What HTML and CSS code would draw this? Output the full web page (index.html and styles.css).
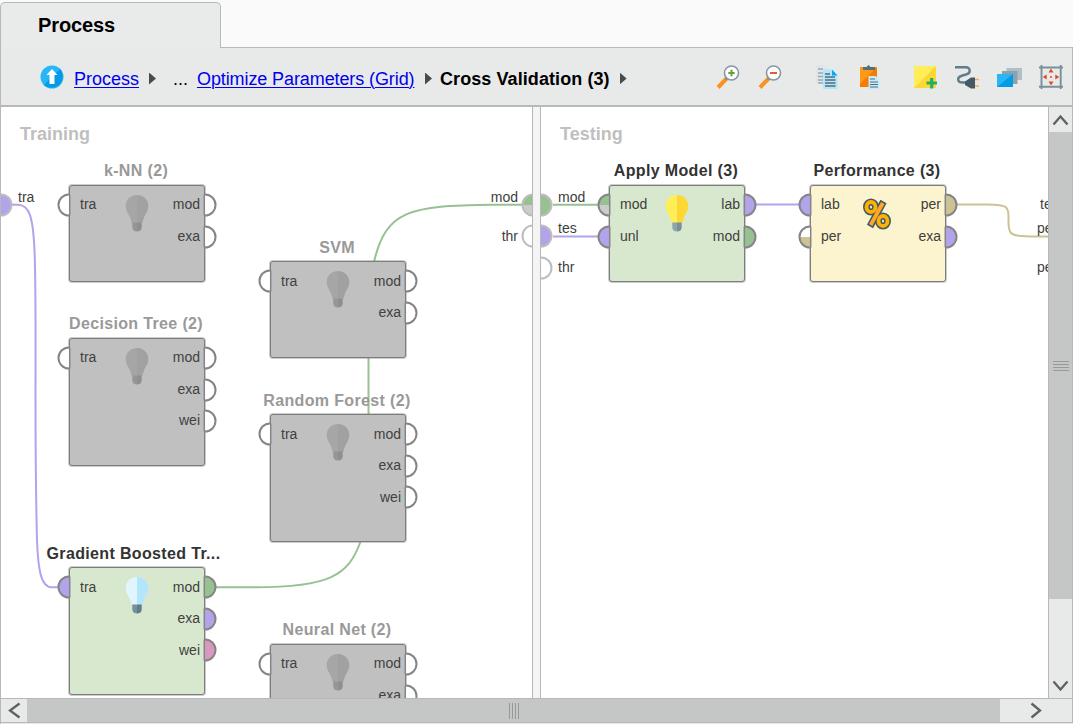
FILE: index.html
```html
<!DOCTYPE html>
<html lang="en">
<head>
<meta charset="utf-8">
<title>Process</title>
<link rel="stylesheet" href="styles.css">
</head>
<body>
<svg class="defs" width="0" height="0">
  <symbol id="pin" viewBox="0 0 14 24"><path class="pf" d="M12 1.5A10.5 10.5 0 0 0 12 22.500z"/><path class="ps" d="M13 1.500H12A10.500 10.500 0 0 0 12 22.500H13"/><path class="pl" d="M12.700 1.500V22.500"/></symbol>
  <symbol id="pin-top" viewBox="0 0 14 24"><path fill="#fff" d="M12 1.500A10.500 10.500 0 0 0 12 22.500z"/><path class="pb" d="M1.500 12A10.500 10.500 0 0 0 12 22.500V12z"/><path class="pf" d="M1.500 12A10.500 10.500 0 0 1 12 1.500V12z"/><path class="ps" d="M13 1.500H12A10.500 10.500 0 0 0 12 22.500H13"/><path class="pl" d="M12.700 1.500V22.500"/></symbol>
  <symbol id="bulb" viewBox="0 0 24 37"><path class="b1" d="M12 0C5 0 .7 5 .7 11c0 5 2.800 7.500 4.300 11.500L6.800 28H12z"/><path class="b2" d="M12 0c7 0 11.300 5 11.300 11 0 5-2.800 7.500-4.300 11.500L17.200 28H12z"/><path class="b3" d="M7.300 27.500H12V36.500c-3 0-4.500-1.500-4.700-4z"/><path class="b4" d="M12 27.500h4.700V32.500c-.2 2.500-1.700 4-4.700 4z"/></symbol>
</svg>
<div class="app">
  <header class="tabs"><div class="tab">Process</div></header>
  <nav class="bar">
    <svg class="up" width="24" height="24" viewBox="0 0 24 24"><circle cx="12" cy="12" r="11.500" fill="#29b6f6"/><path d="M20.100 3.900A11.500 11.500 0 0 1 3.900 20.100z" fill="#039be5"/><path d="M12 4l5.500 6h-3v9h-5v-9h-3z" fill="#fff"/></svg>
    <a class="c1">Process</a><i class="tri t1"></i><span class="dots">...</span><a class="c2">Optimize Parameters (Grid)</a><i class="tri t2"></i><b>Cross Validation (3)</b><i class="tri t3"></i>
    <div class="tools">
      <svg width="24" height="24" viewBox="0 0 24 24"><path d="M2 22.500L11 13" stroke="#fb9220" stroke-width="4"/><path d="M9.500 14.500l3-3" stroke="#78909c" stroke-width="2"/><circle cx="15.500" cy="8" r="7" fill="#fff" stroke="#8798a2" stroke-width="1.600"/><path d="M12.300 8h6.400M15.500 4.800v6.400" stroke="#689f38" stroke-width="2"/></svg>
      <svg width="24" height="24" viewBox="0 0 24 24"><path d="M2 22.500L11 13" stroke="#fb9220" stroke-width="4"/><path d="M9.500 14.500l3-3" stroke="#78909c" stroke-width="2"/><circle cx="15.500" cy="8" r="7" fill="#fff" stroke="#8798a2" stroke-width="1.600"/><path d="M12 8h7" stroke="#dd4b25" stroke-width="1.800"/></svg>
      <svg class="g1" width="24" height="24" viewBox="0 0 24 24"><path d="M1 0h9l5 5v14H1z" fill="#e0e6e8"/><path d="M3 4h5M3 8h6M3 11.500h6M3 15h6M3 18h6" stroke="#9aa9b1" stroke-width="1.300"/><path d="M8 4.500h9l5.500 6V24H8z" fill="#b3e5fc"/><path d="M17 4.500l5.500 6H17z" fill="#03a9f4"/><path d="M10 9h5M10 12h10M10 15h10.500M10 18h10.500M10 21h10.500" stroke="#546e7a" stroke-width="1.300"/></svg>
      <svg class="g2" width="24" height="24" viewBox="0 0 24 24"><path d="M3 2h17v20H3z" fill="#f57c00"/><path d="M3 2h17L3 19z" fill="#ff9814"/><path d="M6 5V2h3.500l2-2 2 2H18v3z" fill="#546e7a"/><path d="M11.500 11h7l4 3.500V24h-11z" fill="#c6ebfa"/><path d="M13 14h5M13 17h8M13 19.500h8M13 22h8" stroke="#546e7a" stroke-width="1.200"/></svg>
      <svg class="g3" width="24" height="24" viewBox="0 0 24 24"><path d="M0 1h22v22H0z" fill="#fdd835"/><path d="M0 1h22L0 23z" fill="#ffee58"/><path d="M12.500 18h10.500M17.700 13v10.500" stroke="#27ae60" stroke-width="3.200"/></svg>
      <svg class="g4" width="25" height="24" viewBox="0 0 25 24"><path d="M0 2.300H11C16 2.300 16 8.500 11 9.500L7.500 10.500C1 12.500 2 18 9 17.500h4" fill="none" stroke="#607d8b" stroke-width="2.400"/><path d="M18 14.500h6M18 21h6" stroke="#fbb03b" stroke-width="1.500"/><path d="M10 16.500l6-4h4v11h-4l-6-3.500z" fill="#455a64"/></svg>
      <svg class="g5" width="25" height="24" viewBox="0 0 25 24"><path d="M9.500 3H25v12H9.500z" fill="#b0bec5"/><path d="M5 6h15.500v13H5z" fill="#8fa1ab"/><path d="M0 9h16v13H0z" fill="#039be5"/><path d="M0 9h16L0 22z" fill="#29b6f6"/></svg>
      <svg class="g6" width="24" height="24" viewBox="0 0 24 24"><path d="M0 2.500h24M0 21.800h24M2.500 0v24M21.700 0v24" stroke="#78909c" stroke-width="1.900"/><path d="M12 3.500l2.500 4h-5zM12 20.500l2.500-4h-5zM3.700 12l4-2.500v5zM20.300 12l-4-2.500v5z" fill="#dd4b25"/><circle cx="12" cy="12" r="1" fill="#dd4b25"/></svg>
    </div>
  </nav>
  <div class="work">
    <main class="panes">
      <section class="pane training">
        <svg class="wires" width="531" height="591" viewBox="1 107 531 591"><path class="vio" d="M12 204.700H18C29 204.700 33 216 34.500 250S35.500 350 35.500 396 36 500 37 540C38 566 40 587.300 52 587.300H58"/><path class="grn" d="M216 587.300H255C330 587.300 348 575 360 543C368 520 368.500 450 368.500 415V358C368.500 330 369 285 374 262C386 210 410 205.500 493 204.800H522"/></svg>
        <h2>Training</h2>
        <svg class="pin flip edge vi" style="left:-2px;top:86px"><use href="#pin"/></svg><span class="lab" style="left:17px;top:81px">tra</span>
        <svg class="pin edge half gr" style="left:520px;top:86px"><use href="#pin-top"/></svg><span class="lab r" style="right:14px;top:81px">mod</span>
        <svg class="pin edge" style="left:520px;top:117px"><use href="#pin"/></svg><span class="lab r" style="right:14px;top:120px">thr</span>

        <article class="node off" style="left:68px;top:78px"><h3>k-NN (2)</h3><svg class="bulb"><use href="#bulb"/></svg>
          <ul class="in"><li>tra<svg class="pin"><use href="#pin"/></svg></li></ul>
          <ul class="out"><li>mod<svg class="pin"><use href="#pin"/></svg></li><li>exa<svg class="pin"><use href="#pin"/></svg></li></ul></article>
        <article class="node off tall" style="left:68px;top:231px"><h3>Decision Tree (2)</h3><svg class="bulb"><use href="#bulb"/></svg>
          <ul class="in"><li>tra<svg class="pin"><use href="#pin"/></svg></li></ul>
          <ul class="out"><li>mod<svg class="pin"><use href="#pin"/></svg></li><li>exa<svg class="pin"><use href="#pin"/></svg></li><li>wei<svg class="pin"><use href="#pin"/></svg></li></ul></article>
        <article class="node green tall sub" style="left:68px;top:460px"><h3 class="cut">Gradient Boosted Tr...</h3><svg class="bulb ice"><use href="#bulb"/></svg>
          <ul class="in"><li>tra<svg class="pin vi"><use href="#pin"/></svg></li></ul>
          <ul class="out"><li>mod<svg class="pin gr"><use href="#pin"/></svg></li><li>exa<svg class="pin vi"><use href="#pin"/></svg></li><li>wei<svg class="pin pk"><use href="#pin"/></svg></li></ul></article>
        <article class="node off sub" style="left:269px;top:154px"><h3>SVM</h3><svg class="bulb"><use href="#bulb"/></svg>
          <ul class="in"><li>tra<svg class="pin"><use href="#pin"/></svg></li></ul>
          <ul class="out"><li>mod<svg class="pin"><use href="#pin"/></svg></li><li>exa<svg class="pin"><use href="#pin"/></svg></li></ul></article>
        <article class="node off tall sub" style="left:269px;top:307px"><h3>Random Forest (2)</h3><svg class="bulb"><use href="#bulb"/></svg>
          <ul class="in"><li>tra<svg class="pin"><use href="#pin"/></svg></li></ul>
          <ul class="out"><li>mod<svg class="pin"><use href="#pin"/></svg></li><li>exa<svg class="pin"><use href="#pin"/></svg></li><li>wei<svg class="pin"><use href="#pin"/></svg></li></ul></article>
        <article class="node off" style="left:269px;top:537px"><h3>Neural Net (2)</h3><svg class="bulb"><use href="#bulb"/></svg>
          <ul class="in"><li>tra<svg class="pin"><use href="#pin"/></svg></li></ul>
          <ul class="out"><li>mod<svg class="pin"><use href="#pin"/></svg></li><li>exa<svg class="pin"><use href="#pin"/></svg></li></ul></article>
      </section>
      <div class="split"></div>
      <section class="pane testing">
        <svg class="wires" width="507" height="591" viewBox="541 107 507 591"><path class="grn" d="M553 204.700H600"/><path class="vio" d="M553 236.500H600M754 204.500H802"/><path class="tan" d="M956 204.500H988C1006 205 1008.500 206 1008.500 216V222C1008.500 234 1010 236.300 1030 236.500H1048"/></svg>
        <h2>Testing</h2>
        <svg class="pin flip edge gr" style="left:-2px;top:86px"><use href="#pin"/></svg><span class="lab" style="left:17px;top:81px">mod</span>
        <svg class="pin flip edge vi" style="left:-2px;top:117px"><use href="#pin"/></svg><span class="lab" style="left:17px;top:112px">tes</span>
        <svg class="pin flip edge" style="left:-2px;top:149px"><use href="#pin"/></svg><span class="lab" style="left:17px;top:151px">thr</span>
        <span class="lab" style="left:499px;top:88px">te</span><span class="lab" style="left:496px;top:112px">pe</span><span class="lab" style="left:496px;top:151px">pe</span>
        <article class="node green" style="left:68px;top:78px"><h3>Apply Model (3)</h3><svg class="bulb sun"><use href="#bulb"/></svg>
          <ul class="in"><li>mod<svg class="pin half gr"><use href="#pin-top"/></svg></li><li>unl<svg class="pin vi"><use href="#pin"/></svg></li></ul>
          <ul class="out"><li>lab<svg class="pin vi"><use href="#pin"/></svg></li><li>mod<svg class="pin gr"><use href="#pin"/></svg></li></ul></article>
        <article class="node cream" style="left:269px;top:78px"><h3>Performance (3)</h3>
          <svg class="pct" viewBox="0 0 30 32"><g fill="none" stroke="#455a64" stroke-width="7"><ellipse cx="9" cy="9" rx="4.500" ry="5"/><ellipse cx="21" cy="23" rx="4.500" ry="5"/><path d="M21.500 3.500L8 28.500"/></g><g fill="none" stroke="#ffb300" stroke-width="3.800"><ellipse cx="9" cy="9" rx="4.500" ry="5"/><path stroke="#ffa726" d="M20.800 5L8.700 27"/><ellipse cx="21" cy="23" rx="4.500" ry="5"/></g></svg>
          <ul class="in"><li>lab<svg class="pin vi"><use href="#pin"/></svg></li><li>per<svg class="pin low"><use href="#pin-top"/></svg></li></ul>
          <ul class="out"><li>per<svg class="pin tn"><use href="#pin"/></svg></li><li>exa<svg class="pin vi"><use href="#pin"/></svg></li></ul></article>
      </section>
    </main>
    <aside class="vscroll">
      <svg class="arr" viewBox="0 0 23 25"><path d="M4.500 17.500L11.500 9.500l7 8"/></svg>
      <div class="vthumb"><i></i><i></i><i></i><i></i></div>
      <svg class="arr" viewBox="0 0 23 25"><path d="M4.500 8.500l7 8 7-8"/></svg>
    </aside>
    <footer class="hscroll">
      <svg class="harr" viewBox="0 0 26 23"><path d="M18.500 4.500l-9.500 7 9.500 7"/></svg>
      <div class="hthumb"><i></i><i></i><i></i><i></i></div>
      <svg class="harr" viewBox="0 0 26 23"><path d="M9.500 4.500l8.500 7-8.500 7"/></svg>
    </footer>
  </div>
</div>
</body>
</html>
```
FILE: styles.css
```css
* { box-sizing: border-box; margin: 0; padding: 0; }
body { background: #fafafa; font-family: "Liberation Sans", Arial, sans-serif; overflow: hidden; }
.defs { position: absolute; }
.app { width: 1073px; height: 724px; display: flex; flex-direction: column; }
.tabs { height: 48px; padding-top: 2px; display: flex; flex: none; }
.tabs::after { content: ""; flex: 1; border-bottom: 1px solid #b8b8b8; }
.tab { width: 221px; background: #e9eaea; border: 1px solid #b8b8b8; border-bottom: 0; border-radius: 5px 5px 0 0; padding: 10px 0 0 37px; font-weight: bold; font-size: 20px; line-height: 24px; letter-spacing: -.1px; }
.bar { height: 59px; flex: none; background: #e8eaea; border: 1px solid #b8b8b8; border-top: 0; border-bottom-width: 2px; display: flex; align-items: center; padding-left: 39px; font-size: 18px; line-height: 22px; white-space: nowrap; }
.bar > * { flex: none; }
.up { margin: 0 10px 0 0; }
.bar a { color: #0000ee; text-decoration: underline; text-underline-offset: 2px; text-decoration-thickness: 1px; padding-top: 4px; }
.bar b, .dots { padding-top: 4px; }
.c1 { width: 65px; }
.tri { width: 7px; height: 12px; background: #4a4a4a; clip-path: polygon(0 0, 100% 50%, 0 100%); margin-top: 4px; }
.t1 { margin: 4px 1px 0 10px; }
.dots { margin-left: 16px; width: 24px; }
.c2 { width: 218px; letter-spacing: -.1px; }
.t2 { margin: 4px 8px 0 10px; }
.t3 { margin-left: 10px; }
.bar b { letter-spacing: .08px; }
.tools { display: flex; margin-left: auto; padding-right: 9px; }
.tools svg { display: block; }
.tools svg + svg { margin-left: 18px; }
.tools svg.g1 { margin-left: 33px; }
.tools svg.g2 { margin-left: 18px; }
.tools svg.g3 { margin-left: 33px; }
.tools svg.g4 { margin-left: 17px; }
.tools svg.g5 { margin-left: 17px; }
.tools svg.g6 { margin-left: 17px; }
.work { flex: 1; display: grid; grid-template-columns: 1047px 25px; grid-template-rows: 591px 25px; border-left: 1px solid #b8b8b8; background: #e8eaea; }
.panes { display: flex; background: #fff; overflow: hidden; grid-area: 1 / 1; }
.pane { position: relative; overflow: hidden; flex: none; }
.training { width: 531px; }
.testing { width: 507px; }
.split { width: 9px; background: #f4f4f4; border: solid #b8b8b8; border-width: 0 1px; flex: none; }
.wires { position: absolute; left: 0; top: 0; }
.wires path { fill: none; stroke-width: 2; }
.wires .vio { stroke: #b3a3ea; }
.wires .grn { stroke: #98c193; }
.wires .tan { stroke: #ccc293; }
h2 { font-size: 18px; line-height: 20px; color: #bfbfbf; padding: 17px 0 0 19px; }
.lab { position: absolute; font-size: 14px; line-height: 18px; color: #404040; }
.node { position: absolute; width: 136px; height: 97px; border: 1px solid #7d7d7d; box-shadow: 0 0 0 1px rgba(128, 128, 128, .4); border-radius: 3px; background: #d8e8ce; display: flex; justify-content: space-between; padding: 3px 4px 0 10px; font-size: 14px; color: #404040; }
.tall { height: 128px; }
.off { background: #c0c0c0; }
.cream { background: #fcf3cf; }
.node h3 { position: absolute; left: -43px; right: -41px; bottom: 100%; text-align: center; font-size: 16px; line-height: 20px; letter-spacing: .35px; margin-bottom: 5px; color: #333; white-space: nowrap; }
.node h3.cut { left: -48px; right: -41px; }
.off h3 { color: #999; }
.node ul { list-style: none; }
.node li { height: 31.5px; line-height: 30px; position: relative; }
.sub ul { padding-top: .5px; }
.node.sub h3 { margin-bottom: 4px; }
.out { text-align: right; }
.pin { position: absolute; width: 14px; height: 24px; color: #858585; --f: #fff; --b: #ccc; }
.in .pin { left: -23.500px; top: 4px; }
.out .pin { right: -16.500px; top: 4px; }
.sub .pin { top: 3.500px; }
.out .pin, .flip { transform: scaleX(-1); }
.edge { color: #bdbdbd; }
.pf { fill: var(--f); }
.pb { fill: var(--b); }
.ps { fill: none; stroke: currentColor; stroke-width: 2; }
.pl { fill: none; stroke: currentColor; stroke-width: 1.5; }
.vi { --f: #b3a3ea; }
.gr { --f: #98c193; }
.pk { --f: #d898c0; }
.tn { --f: #ccc293; }
.low { --b: #ccc293; }
.bulb { position: absolute; left: 55px; top: 9px; width: 24px; height: 37px; --a: #a6a6a6; --c: #a1a1a1; --d: #969696; --e: #8f8f8f; }
.ice { --a: #e1f5fe; --c: #b3e5fc; --d: #78909c; --e: #607d8b; }
.sun { --a: #ffee58; --c: #fdd835; --d: #90a4ae; --e: #78909c; }
.b1 { fill: var(--a); } .b2 { fill: var(--c); } .b3 { fill: var(--d); } .b4 { fill: var(--e); }
.pct { position: absolute; left: 51px; top: 12px; width: 30px; height: 32px; }
.vscroll { border: solid #b8b8b8; border-width: 0 1px; display: flex; flex-direction: column; grid-area: 1 / 2; }
.arr { width: 23px; height: 25px; flex: none; }
.arr path, .harr path { fill: none; stroke: #606060; stroke-width: 2.300; }
.vthumb { height: 467px; background: #c5c7c6; margin-bottom: 74px; display: flex; flex-direction: column; align-items: center; justify-content: center; gap: 2px; flex: none; }
.vthumb i { width: 16px; height: 1px; background: #999; }
.hscroll { grid-area: 2 / 1 / 3 / 3; border: solid #b8b8b8; border-width: 1px 1px 1px 0; height: 25px; display: flex; }
.harr { width: 26px; height: 23px; flex: none; }
.hthumb { width: 973px; background: #c5c7c6; margin-right: 22px; flex: none; display: flex; align-items: center; justify-content: center; gap: 2px; }
.hthumb i { width: 1px; height: 16px; background: #999; }
```
